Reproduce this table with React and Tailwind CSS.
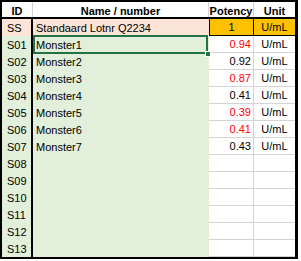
const rows = [
  { id: "S01", name: "Monster1", value: "0.94", red: true },
  { id: "S02", name: "Monster2", value: "0.92" },
  { id: "S03", name: "Monster3", value: "0.87", red: true },
  { id: "S04", name: "Monster4", value: "0.41" },
  { id: "S05", name: "Monster5", value: "0.39", red: true },
  { id: "S06", name: "Monster6", value: "0.41", red: true },
  { id: "S07", name: "Monster7", value: "0.43" },
  { id: "S08" },
  { id: "S09" },
  { id: "S10" },
  { id: "S11" },
  { id: "S12" },
  { id: "S13" },
];

function Row({ row, selected }) {
  return (
    <div className="flex h-[17px]">
      <div className="w-[31px] shrink-0 border-r-2 border-black bg-[#e2efda] pl-[5px] pt-px leading-[16px]">
        {row.id}
      </div>
      <div className="relative w-[176px] shrink-0 bg-[#e2efda] pl-[3px] pt-px leading-[16px] whitespace-nowrap">
        {row.name}
        {selected && (
          <>
            <div className="absolute left-0 top-[-1px] z-10 h-[19px] w-[175px] border-2 border-[#217346]" />
            <div className="absolute left-[172px] top-[15px] z-20 h-[6px] w-[6px] border border-white bg-[#217346]" />
          </>
        )}
      </div>
      <div
        className={`w-[45px] shrink-0 border-r border-b border-[#d4d4d4] bg-white pr-[2px] pt-px text-right leading-[15px] ${
          row.red ? "text-[#ff0000]" : "text-black"
        }`}
      >
        {row.value}
      </div>
      <div className="w-[41px] shrink-0 border-b border-[#d4d4d4] bg-white pt-px text-center leading-[15px]">
        {row.value ? "U/mL" : ""}
      </div>
    </div>
  );
}

export default function App() {
  return (
    <div className="h-[261px] w-[301px] bg-white font-['Liberation_Sans',Arial,sans-serif] text-[11px] text-black">
      <div className="w-[298px] border-t-2 border-b-2 border-l-2 border-r-[3px] border-black">
        {/* header */}
        <div className="flex h-[17px] border-b-2 border-black font-bold">
          <div className="w-[31px] shrink-0 border-r border-[#d4d4d4] pt-[3px] text-center leading-[12px]">
            ID
          </div>
          <div className="w-[176px] shrink-0 border-r border-[#d4d4d4] pt-[3px] text-center leading-[12px]">
            Name / number
          </div>
          <div className="w-[45px] shrink-0 border-r border-[#d4d4d4] pt-[3px] text-center leading-[12px]">
            Potency
          </div>
          <div className="w-[41px] shrink-0 pt-[3px] text-center leading-[12px]">
            Unit
          </div>
        </div>

        {/* standard row */}
        <div className="flex h-[17px]">
          <div className="w-[31px] shrink-0 border-r-2 border-black bg-[#fce4d6] pl-[5px] pt-px leading-[16px]">
            SS
          </div>
          <div className="w-[176px] shrink-0 bg-[#fce4d6] pl-[3px] pt-px leading-[16px] whitespace-nowrap">
            Standaard Lotnr Q2234
          </div>
          <div className="w-[45px] shrink-0 border-l border-r border-b border-black bg-[#ffc000] pt-px text-center leading-[15px]">
            1
          </div>
          <div className="w-[41px] shrink-0 border-b border-black bg-[#ffc000] pt-px text-center leading-[15px]">
            U/mL
          </div>
        </div>

        {rows.map((row, i) => (
          <Row key={row.id} row={row} selected={i === 0} />
        ))}
      </div>
    </div>
  );
}
